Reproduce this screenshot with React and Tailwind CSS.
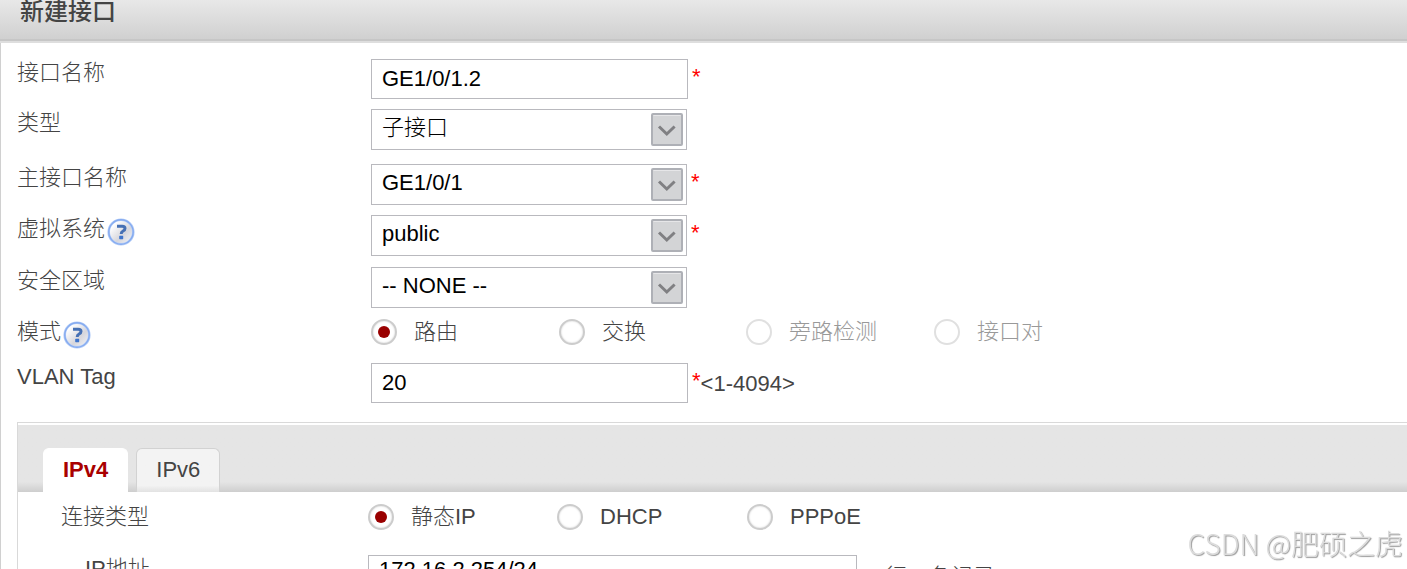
import { useId, useState } from "react";

function HelpIcon() {
  return (
    <svg viewBox="0 0 28 28" className="mt-[3px] size-7 shrink-0" aria-hidden="true">
      <defs>
        <linearGradient id="helpFill" x1="0" y1="0" x2="1" y2="1">
          <stop offset="0.2" stopColor="#ffffff" />
          <stop offset="0.6" stopColor="#d6d6dc" />
          <stop offset="1" stopColor="#f6f8fc" />
        </linearGradient>
      </defs>
      <circle cx="14" cy="14" r="12.3" fill="url(#helpFill)" stroke="#b4cdf8" strokeWidth="2.6" />
      <circle cx="14" cy="14" r="12.2" fill="none" stroke="#86abef" strokeWidth="1.4" />
      <path d="M10 8.3h5.2q2.8 0 2.8 2.2 0 1.5-1.9 2.5-1.9 1-1.9 3" fill="none" stroke="#4670b4" strokeWidth="3" />
      <rect x="12.2" y="17.8" width="4" height="3.4" rx="0.6" fill="#3e74cc" />
    </svg>
  );
}

function Row({ label, htmlFor, help, className = "mb-[11px]", children }) {
  return (
    <div className={`flex items-start ${className}`}>
      <div className="flex w-[354px] shrink-0 items-start gap-0.5">
        <label htmlFor={htmlFor} className="font-light leading-7">{label}</label>
        {help && (
          <button type="button" aria-label="帮助" className="shrink-0">
            <HelpIcon />
          </button>
        )}
      </div>
      {children}
    </div>
  );
}

function Star() {
  return <span className="ml-1 pb-1.5 text-[#ff0000]">*</span>;
}

function TextField({ id, value }) {
  return (
    <input
      id={id}
      type="text"
      defaultValue={value}
      className="h-10 w-[317px] border border-[#b9b9be] bg-white px-2.5 text-black outline-none"
    />
  );
}

function SelectField({ id, value }) {
  return (
    <div className="relative w-[316px]">
      <select
        id={id}
        defaultValue={value}
        className="block h-[41px] w-full appearance-none border border-[#b9b9be] bg-white pb-1 pl-2.5 pr-10 font-light text-black outline-none"
      >
        <option>{value}</option>
      </select>
      <svg viewBox="0 0 32 33" className="pointer-events-none absolute right-1 top-1 h-[33px] w-8" aria-hidden="true">
        <rect x="1" y="1" width="30" height="31" rx="1" fill="#d3d4d6" stroke="#aeb0b6" strokeWidth="2" />
        <path d="M2.5 2.5h27" stroke="#e6e6e8" />
        <path d="M8 13.5l7.8 7.5 7.8-7.5" fill="none" stroke="#808083" strokeWidth="3" />
      </svg>
    </div>
  );
}

function RadioGroup({ options, initial, columns, label }) {
  const name = useId();
  const [picked, setPicked] = useState(initial);
  return (
    <div role="radiogroup" aria-label={label} className={`grid ${columns}`}>
      {options.map((o) => (
        <label
          key={o.text}
          className={`flex items-center gap-[17px] font-light leading-7 ${o.disabled ? "text-[#999]" : ""}`}
        >
          <span className="grid size-[26px] shrink-0 place-items-center">
            <input
              type="radio"
              name={name}
              disabled={o.disabled}
              checked={picked === o.text}
              onChange={() => setPicked(o.text)}
              className="col-start-1 row-start-1 size-[26px] appearance-none rounded-full border-2 border-[#cccccc] bg-white shadow-[inset_0_0_2px_#ccc] disabled:border-[#e0e0e0] disabled:shadow-none"
            />
            {picked === o.text && (
              <span className="pointer-events-none relative col-start-1 row-start-1 size-3 rounded-full bg-[#990000]" />
            )}
          </span>
          {o.text}
        </label>
      ))}
    </div>
  );
}

const tabBase = "h-11 rounded-t-md border border-b-0 px-[19px] pb-0.5 leading-none";

export default function App() {
  const [tab, setTab] = useState("IPv4");
  return (
    <div className="h-screen overflow-hidden bg-white font-['Liberation_Sans','Noto_Sans_CJK_SC',sans-serif] text-[22px] text-[#444]">
      <header className="border-b-2 border-[#dedede] bg-linear-to-b from-[#e8e8e8] to-[#cfcfcf] pb-[17px] pl-5 shadow-[inset_0_-2px_0_#c6c6c6]">
        <h1 className="text-2xl font-medium leading-6">新建接口</h1>
      </header>

      <main className="border-l border-[#d0d0d0] pl-4 pt-4">
        <form onSubmit={(e) => e.preventDefault()}>
          <Row label="接口名称" htmlFor="name" className="mb-[10px]">
            <div className="flex items-center">
              <TextField id="name" value="GE1/0/1.2" />
              <Star />
            </div>
          </Row>
          <Row label="类型" htmlFor="type" className="mb-[14px]">
            <SelectField id="type" value="子接口" />
          </Row>
          <Row label="主接口名称" htmlFor="parent" className="mb-[10px]">
            <div className="flex items-center">
              <SelectField id="parent" value="GE1/0/1" />
              <Star />
            </div>
          </Row>
          <Row label="虚拟系统" htmlFor="vsys" help>
            <div className="flex items-center">
              <SelectField id="vsys" value="public" />
              <Star />
            </div>
          </Row>
          <Row label="安全区域" htmlFor="zone" className="mb-[10px]">
            <SelectField id="zone" value="-- NONE --" />
          </Row>
          <Row label="模式" help className="mb-[14px]">
            <RadioGroup
              label="模式"
              initial="路由"
              columns="grid-cols-[188px_187px_188px_auto]"
              options={[
                { text: "路由" },
                { text: "交换" },
                { text: "旁路检测", disabled: true },
                { text: "接口对", disabled: true },
              ]}
            />
          </Row>
          <Row label="VLAN Tag" htmlFor="vlan" className="mb-[19px]">
            <div className="flex items-center">
              <TextField id="vlan" value="20" />
              <Star />
              <span>&lt;1-4094&gt;</span>
            </div>
          </Row>

          <section className="border-l border-t border-[#d9d9d9]">
            <div
              role="tablist"
              className="mt-0.5 flex items-end gap-2 bg-linear-to-b from-[#e5e5e5] from-85% to-[#cecece] pl-[25px] pt-[23px]"
            >
              <button
                type="button"
                role="tab"
                aria-selected={tab === "IPv4"}
                onClick={() => setTab("IPv4")}
                className={`${tabBase} ${tab === "IPv4" ? "border-white bg-white font-bold text-[#a90000]" : "border-[#d2d2d2] bg-[#f2f2f2]"}`}
              >
                IPv4
              </button>
              <button
                type="button"
                role="tab"
                aria-selected={tab === "IPv6"}
                onClick={() => setTab("IPv6")}
                className={`${tabBase} ${tab === "IPv6" ? "border-white bg-white font-bold text-[#a90000]" : "border-[#d2d2d2] bg-linear-to-b from-[#f3f3f3] from-85% to-[#e2e2e2]"}`}
              >
                IPv6
              </button>
            </div>

            <div role="tabpanel" className="pt-[11px]">
              <div className="mb-6 flex">
                <div className="w-[350px] shrink-0 pl-[43px] font-light leading-7">连接类型</div>
                <RadioGroup
                  label="连接类型"
                  initial="静态IP"
                  columns="grid-cols-[189px_190px_auto]"
                  options={[{ text: "静态IP" }, { text: "DHCP" }, { text: "PPPoE" }]}
                />
              </div>
              <div className="flex items-start">
                <label htmlFor="ip" className="w-[350px] shrink-0 pl-[67px] font-light leading-7">
                  IP地址
                </label>
                <textarea
                  id="ip"
                  rows={3}
                  defaultValue="172.16.2.254/24"
                  className="w-[489px] resize-none border border-[#b9b9be] bg-white px-2.5 leading-7 text-black outline-none"
                />
                <p className="ml-[6px] mt-2 font-light leading-7">一行一条记录</p>
              </div>
            </div>
          </section>
        </form>
      </main>

      <div className="pointer-events-none fixed bottom-1.5 right-1 font-['Noto_Sans_CJK_SC',sans-serif] text-[28px] font-light leading-10 text-[#dcdcdc] [text-shadow:1px_1px_1px_#999]">
        CSDN @肥硕之虎
      </div>
    </div>
  );
}
